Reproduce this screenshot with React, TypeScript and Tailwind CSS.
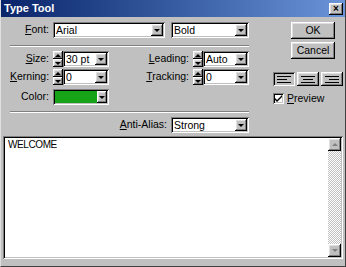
import React from 'react';

const raised =
  'shadow-[inset_-1px_-1px_0_#000000,inset_1px_1px_0_#ffffff,inset_-2px_-2px_0_#808080,inset_2px_2px_0_#dfdfdf]';
const sunken =
  'shadow-[inset_1px_1px_0_#808080,inset_-1px_-1px_0_#ffffff,inset_2px_2px_0_#000000,inset_-2px_-2px_0_#c0c0c0]';

const Down = ({ color = 'border-t-black' }: { color?: string }) => (
  <span className={`w-0 h-0 border-x-[3px] border-x-transparent border-t-[3px] ${color}`} />
);
const Up = ({ color = 'border-b-black' }: { color?: string }) => (
  <span className={`w-0 h-0 border-x-[3px] border-x-transparent border-b-[3px] ${color}`} />
);

const Label = ({ text, u, w }: { text: string; u?: number; w: string }) => (
  <span className={`${w} text-right pr-[4px] shrink-0`}>
    {u === undefined ? (
      text
    ) : (
      <>
        {text.slice(0, u)}
        <span className="underline underline-offset-1">{text[u]}</span>
        {text.slice(u + 1)}
      </>
    )}
  </span>
);

const Combo = ({ w, value }: { w: string; value: string }) => (
  <div className={`${w} h-[16px] bg-white ${sunken} flex items-center shrink-0`}>
    <span className="flex-1 pl-[3px] leading-none">{value}</span>
    <div className={`w-[12px] h-[12px] mr-[2px] bg-[#c0c0c0] ${raised} flex items-center justify-center`}>
      <Down />
    </div>
  </div>
);

const Spinner = () => (
  <div className="w-[10px] h-[16px] flex flex-col shrink-0">
    <div className={`h-[8px] bg-[#c0c0c0] ${raised} flex items-center justify-center`}>
      <Up />
    </div>
    <div className={`h-[8px] bg-[#c0c0c0] ${raised} flex items-center justify-center`}>
      <Down />
    </div>
  </div>
);

const Separator = () => (
  <div className="h-[2px] border-t border-t-[#808080] border-b border-b-white" />
);

const AlignButton = ({ align, pressed }: { align: string; pressed?: boolean }) => (
  <div
    className={`w-[22px] h-[14px] bg-[#c0c0c0] ${pressed ? sunken : raised} flex flex-col justify-center gap-[2px] px-[4px] ${align}`}
  >
    <span className="h-px w-[14px] bg-black" />
    <span className="h-px w-[10px] bg-black" />
    <span className="h-px w-[14px] bg-black" />
  </div>
);

export default function App() {
  return (
    <div className="w-[346px] h-[267px] bg-[#c0c0c0] flex flex-col font-['Liberation_Sans',Arial,sans-serif] text-[10.5px] text-black border-l border-l-[#dfdfdf] border-r border-r-[#404040] border-b border-b-[#404040] overflow-hidden">
      {/* title bar */}
      <div className="h-[17px] shrink-0 bg-gradient-to-r from-[#0a246a] to-[#6b95d8] flex items-center pl-[3px] pr-[2px]">
        <span className="flex-1 text-white font-bold text-[11px]">Type Tool</span>
        <div className={`w-[14px] h-[12px] bg-[#c0c0c0] ${raised} flex items-center justify-center text-[10px] font-bold leading-none`}>
          ×
        </div>
      </div>

      <div className="flex pt-[5px] pl-[9px]">
        {/* left controls */}
        <div className="w-[239px] flex flex-col">
          <div className="flex items-center">
            <Label text="Font:" u={0} w="w-[43px]" />
            <Combo w="w-[112px]" value="Arial" />
            <div className="w-[6px]" />
            <Combo w="w-[78px]" value="Bold" />
          </div>
          <div className="mt-[7px]">
            <Separator />
          </div>
          <div className="flex items-center mt-[4px]">
            <Label text="Size:" u={0} w="w-[43px]" />
            <Spinner />
            <Combo w="w-[46px]" value="30 pt" />
            <Label text="Leading:" u={0} w="w-[84px]" />
            <Spinner />
            <Combo w="w-[46px]" value="Auto" />
          </div>
          <div className="flex items-center mt-[2px]">
            <Label text="Kerning:" u={0} w="w-[43px]" />
            <Spinner />
            <Combo w="w-[46px]" value="0" />
            <Label text="Tracking:" u={0} w="w-[84px]" />
            <Spinner />
            <Combo w="w-[46px]" value="0" />
          </div>
          <div className="flex items-center mt-[4px]">
            <Label text="Color:" w="w-[43px]" />
            <div className={`w-[56px] h-[16px] bg-white ${sunken} flex items-center p-[2px]`}>
              <div className="flex-1 h-full bg-[#17a317]" />
              <div className={`w-[10px] h-full bg-[#c0c0c0] ${raised} flex items-center justify-center`}>
                <Down />
              </div>
            </div>
          </div>
          <div className="mt-[6px]">
            <Separator />
          </div>
          <div className="flex items-center mt-[4px]">
            <Label text="Anti-Alias:" u={0} w="w-[161px]" />
            <Combo w="w-[78px]" value="Strong" />
          </div>
        </div>

        {/* right controls */}
        <div className="flex flex-col ml-[24px]">
          <div className="flex flex-col items-start pl-[18px] gap-[3px]">
            <div className={`w-[44px] h-[17px] bg-[#c0c0c0] ${raised} flex items-center justify-center`}>
              OK
            </div>
            <div className={`w-[44px] h-[17px] bg-[#c0c0c0] ${raised} flex items-center justify-center`}>
              Cancel
            </div>
          </div>
          <div className="flex gap-[2px] mt-[13px]">
            <AlignButton align="items-start" pressed />
            <AlignButton align="items-center" />
            <AlignButton align="items-end" />
          </div>
          <div className="flex items-center mt-[5px] gap-[3px]">
            <div className={`w-[11px] h-[11px] bg-white ${sunken} flex items-center justify-center`}>
              <svg width="7" height="7" viewBox="0 0 7 7">
                <path d="M0 3 L2 5 L7 0 L7 2 L2 7 L0 5 Z" fill="#000" />
              </svg>
            </div>
            <span>
              <span className="underline underline-offset-1">P</span>review
            </span>
          </div>
        </div>
      </div>

      {/* text area */}
      <div className={`mt-[3px] mx-[2px] h-[123px] bg-white ${sunken} flex p-[2px]`}>
        <div className="flex-1 pl-[3px] pt-[2px] leading-none text-[10px] tracking-[-0.4px]">WELCOME</div>
        <div className="w-[13px] flex flex-col">
          <div className={`h-[13px] bg-[#c0c0c0] ${raised} flex items-center justify-center`}>
            <Up color="border-b-[#808080]" />
          </div>
          <div className="flex-1 bg-[repeating-conic-gradient(#ffffff_0_25%,#c0c0c0_0_50%)] bg-[length:2px_2px]" />
          <div className={`h-[13px] bg-[#c0c0c0] ${raised} flex items-center justify-center`}>
            <Down color="border-t-[#808080]" />
          </div>
        </div>
      </div>
    </div>
  );
}
